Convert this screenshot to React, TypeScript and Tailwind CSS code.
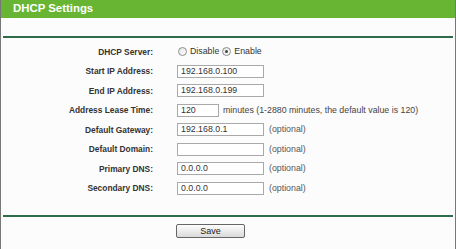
import React from "react";

type Row = {
  label: string;
  kind: "radio" | "input" | "lease";
  value?: string;
  optional?: boolean;
};

const rows: Row[] = [
  { label: "DHCP Server:", kind: "radio" },
  { label: "Start IP Address:", kind: "input", value: "192.168.0.100" },
  { label: "End IP Address:", kind: "input", value: "192.168.0.199" },
  { label: "Address Lease Time:", kind: "lease", value: "120" },
  { label: "Default Gateway:", kind: "input", value: "192.168.0.1", optional: true },
  { label: "Default Domain:", kind: "input", value: "", optional: true },
  { label: "Primary DNS:", kind: "input", value: "0.0.0.0", optional: true },
  { label: "Secondary DNS:", kind: "input", value: "0.0.0.0", optional: true },
];

function Radio({ checked }: { checked?: boolean }) {
  return (
    <span className="w-[9px] h-[9px] rounded-full border border-[#8c8c8c] bg-gradient-to-br from-[#e4e4e4] to-white flex items-center justify-center shrink-0">
      {checked && <span className="w-[3px] h-[3px] rounded-full bg-[#3a4a3a]" />}
    </span>
  );
}

function Box({ value, w }: { value: string; w: string }) {
  return (
    <div className={`${w} h-[13px] border border-[#a9a9a9] bg-white flex items-center pl-[3px] text-[8.8px] text-[#333] leading-none`}>
      {value}
    </div>
  );
}

export default function App() {
  return (
    <div className="w-[456px] h-[249px] bg-[#fcfcfc] border-l border-r border-[#777] font-['Liberation_Sans',Arial,sans-serif] text-[#222] overflow-hidden">
      <div className="h-[18px] bg-[#67b532] flex items-center pl-[12px]">
        <span className="text-white font-bold text-[11.4px] leading-none">DHCP Settings</span>
      </div>
      <div className="h-[18px]" />
      <div className="mx-[2px] h-[2px] bg-[#2f6a4a]" />
      <div className="pt-[4px]">
        {rows.map((r) => (
          <div key={r.label} className="grid grid-cols-[152px_1fr] h-[19.5px] items-center">
            <div className="text-right font-bold text-[8.4px] leading-none text-[#333]">{r.label}</div>
            <div className="pl-[24px] flex items-center text-[8.8px] leading-none">
              {r.kind === "radio" && (
                <div className="flex items-center">
                  <span className="ml-[1px]"><Radio /></span>
                  <span className="ml-[3px] text-[#333]">Disable</span>
                  <span className="ml-[3px]"><Radio checked /></span>
                  <span className="ml-[3px] text-[#333]">Enable</span>
                </div>
              )}
              {r.kind === "input" && <Box value={r.value ?? ""} w="w-[87px]" />}
              {r.kind === "lease" && (
                <>
                  <Box value={r.value ?? ""} w="w-[42px]" />
                  <span className="ml-[4px] text-[#444]">minutes (1-2880 minutes, the default value is 120)</span>
                </>
              )}
              {r.optional && <span className="ml-[5px] text-[#555]">(optional)</span>}
            </div>
          </div>
        ))}
      </div>
      <div className="h-[17px]" />
      <div className="mx-[2px] h-[2px] bg-[#2f6a4a]" />
      <div className="pt-[7px] pl-[175px]">
        <button className="w-[69px] h-[14px] border border-[#666] rounded-[2px] bg-gradient-to-b from-[#fdfdfd] to-[#dadada] text-[9px] leading-none text-[#222] flex items-center justify-center">
          Save
        </button>
      </div>
    </div>
  );
}
